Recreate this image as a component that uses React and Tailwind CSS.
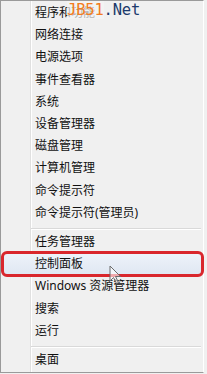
const groups = [
  [
    "程序和功能",
    "网络连接",
    "电源选项",
    "事件查看器",
    "系统",
    "设备管理器",
    "磁盘管理",
    "计算机管理",
    "命令提示符",
    "命令提示符(管理员)",
  ],
  ["任务管理器", "控制面板", "Windows 资源管理器", "搜索", "运行"],
  ["桌面"],
];

function Separator() {
  return (
    <div className="h-[7px] pt-[4px] pr-[2px]">
      <div className="h-px bg-[#d9d9d9]" />
      <div className="h-px bg-white" />
    </div>
  );
}

function Item({ label, active }) {
  if (active) {
    return (
      <div className="relative -ml-[28px] mr-px h-[22.2px] flex items-center pl-[32px] rounded-[4px] bg-gradient-to-b from-[#eef3fa] to-[#dfe7f2] text-[12px] text-[#111]">
        {label}
        {/* red annotation */}
        <div className="absolute -left-[2px] -right-[2px] -top-[2px] -bottom-[2px] rounded-[6px] border-[3px] border-[#d9272d]" />
        <Cursor />
      </div>
    );
  }
  return <div className="h-[22.2px] flex items-center pl-[4px] text-[12px] text-[#111]">{label}</div>;
}

function Cursor() {
  return (
    <svg className="absolute left-[106px] top-[12px]" width="13" height="20" viewBox="0 0 13 20">
      <path
        d="M1 1 L1 16 L4.5 12.5 L7.5 18.5 L9.5 17.5 L6.5 11.5 L11.5 11.5 Z"
        fill="rgba(255,255,255,0.6)"
        stroke="#6b6b6b"
        strokeWidth="1"
        strokeLinejoin="round"
      />
    </svg>
  );
}

export default function App() {
  return (
    <div
      className="relative w-[207px] h-[374px] bg-[#f0f0f0] overflow-hidden"
      style={{ fontFamily: '"Noto Sans", "Noto Sans CJK SC", sans-serif' }}
    >
      <div className="flex h-[373px] w-[204px] border-l border-t border-b border-r border-[#9a9a9a] border-r-white">
        <div className="w-[29px] shrink-0" />
        <div className="flex-1 pt-px border-l border-[#e0e0e0] shadow-[inset_1px_0_0_#ffffff]">
          {groups.map((g, gi) => (
            <div key={gi}>
              {gi > 0 && <Separator />}
              {g.map((label) => (
                <Item key={label} label={label} active={label === "控制面板"} />
              ))}
            </div>
          ))}
        </div>
      </div>

      {/* watermark */}
      <div
        className="absolute left-[67px] top-[3px] text-[15.5px] leading-none tracking-[-0.2px]"
        style={{ fontFamily: '"DejaVu Sans Mono", monospace' }}
      >
        <span className="text-[#f27c21] bg-[#f4f4f4]/70">JB51</span>
        <span className="text-[#1c3a6c]">.Net</span>
      </div>
    </div>
  );
}
